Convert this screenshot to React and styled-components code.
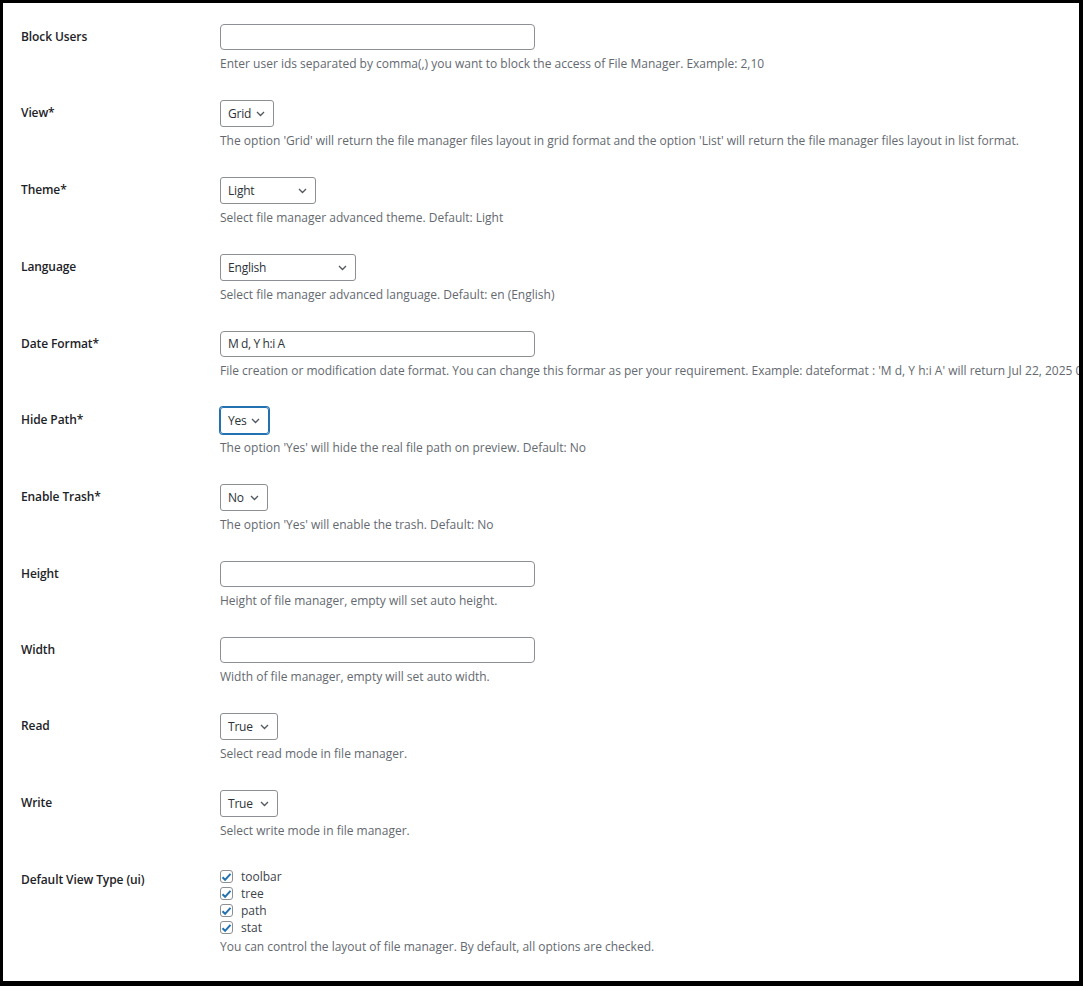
import React from "react";
import styled, { createGlobalStyle } from "styled-components";

const Global = createGlobalStyle`
  html, body { margin: 0; padding: 0; background: #000; }
  body { font-family: "Open Sans", "Noto Sans", sans-serif; }
  * { box-sizing: border-box; }
`;

const Frame = styled.div`
  width: 1083px;
  height: 986px;
  border-style: solid;
  border-color: #000;
  border-width: 3px 4px 5px 3px;
  background: #fff;
  overflow: hidden;
  padding: 7px 0 0 18px;
`;

const Row = styled.div`
  display: grid;
  grid-template-columns: 199px 1fr;
  padding: 14px 0;
`;

const Label = styled.div`
  font-size: 12px;
  font-weight: 600;
  color: #1d2327;
  line-height: 16px;
  padding-top: ${(p) => p.$top ?? 5}px;
  letter-spacing: -0.1px;
`;

const Field = styled.div`
  display: flex;
  flex-direction: column;
  align-items: flex-start;
  min-width: 0;
`;

const TextInput = styled.div`
  width: 315px;
  height: 26px;
  border: 1px solid #8c8f94;
  border-radius: 4px;
  font-size: 12px;
  color: #2c3338;
  line-height: 24px;
  padding: 0 7px;
  letter-spacing: -0.4px;
`;

const Select = styled.div`
  width: ${(p) => p.$w}px;
  height: 27px;
  border: 1px solid ${(p) => (p.$focus ? "#2271b1" : "#8c8f94")};
  box-shadow: ${(p) => (p.$focus ? "0 0 0 1px #2271b1" : "none")};
  border-radius: 3px;
  display: flex;
  align-items: center;
  justify-content: space-between;
  padding: 0 8px 0 7px;
  font-size: 12px;
  color: #2c3338;
  letter-spacing: -0.2px;
`;

const Description = styled.div`
  margin-top: ${(p) => p.$gap ?? 6}px;
  font-size: 12px;
  line-height: 16px;
  color: #646970;
  white-space: nowrap;
`;

const CheckList = styled.div`
  display: flex;
  flex-direction: column;
  padding-top: 1px;
`;

const CheckRow = styled.label`
  display: flex;
  align-items: center;
  gap: 8px;
  height: 17px;
  font-size: 12px;
  color: #3c434a;
`;

const Box = styled.span`
  width: 13px;
  height: 13px;
  border: 1px solid #8c8f94;
  border-radius: 3px;
  display: flex;
  align-items: center;
  justify-content: center;
`;

const Chevron = () => (
  <svg width="9" height="6" viewBox="0 0 9 6" fill="none">
    <path d="M1 1l3.5 3.5L8 1" stroke="#50575e" strokeWidth="1.3" />
  </svg>
);

const Check = () => (
  <svg width="11" height="10" viewBox="0 0 11 10" fill="none">
    <path d="M1.5 5.2l2.6 2.6L9.5 1.8" stroke="#2271b1" strokeWidth="2" />
  </svg>
);

const rows = [
  { label: "Block Users", kind: "input", value: "", desc: "Enter user ids separated by comma(,) you want to block the access of File Manager. Example: 2,10" },
  { label: "View*", kind: "select", value: "Grid", w: 54, desc: "The option 'Grid' will return the file manager files layout in grid format and the option 'List' will return the file manager files layout in list format." },
  { label: "Theme*", kind: "select", value: "Light", w: 96, desc: "Select file manager advanced theme. Default: Light" },
  { label: "Language", kind: "select", value: "English", w: 136, desc: "Select file manager advanced language. Default: en (English)" },
  { label: "Date Format*", kind: "input", value: "M d, Y h:i A", desc: "File creation or modification date format. You can change this formar as per your requirement. Example: dateformat : 'M d, Y h:i A' will return Jul 22, 2025 09:30 AM" },
  { label: "Hide Path*", kind: "select", value: "Yes", w: 49, focus: true, desc: "The option 'Yes' will hide the real file path on preview. Default: No" },
  { label: "Enable Trash*", kind: "select", value: "No", w: 48, desc: "The option 'Yes' will enable the trash. Default: No" },
  { label: "Height", kind: "input", value: "", desc: "Height of file manager, empty will set auto height." },
  { label: "Width", kind: "input", value: "", desc: "Width of file manager, empty will set auto width." },
  { label: "Read", kind: "select", value: "True", w: 58, desc: "Select read mode in file manager." },
  { label: "Write", kind: "select", value: "True", w: 58, desc: "Select write mode in file manager." },
];

export default function App() {
  return (
    <>
      <Global />
      <Frame>
        {rows.map((r) => (
          <Row key={r.label}>
            <Label>{r.label}</Label>
            <Field>
              {r.kind === "input" ? (
                <TextInput>{r.value}</TextInput>
              ) : (
                <Select $w={r.w} $focus={r.focus}>
                  <span>{r.value}</span>
                  <Chevron />
                </Select>
              )}
              <Description>{r.desc}</Description>
            </Field>
          </Row>
        ))}
        <Row>
          <Label $top={5}>Default View Type (ui)</Label>
          <Field>
            <CheckList>
              {["toolbar", "tree", "path", "stat"].map((c) => (
                <CheckRow key={c}>
                  <Box>
                    <Check />
                  </Box>
                  {c}
                </CheckRow>
              ))}
            </CheckList>
            <Description $gap={3}>
              You can control the layout of file manager. By default, all options are checked.
            </Description>
          </Field>
        </Row>
      </Frame>
    </>
  );
}
